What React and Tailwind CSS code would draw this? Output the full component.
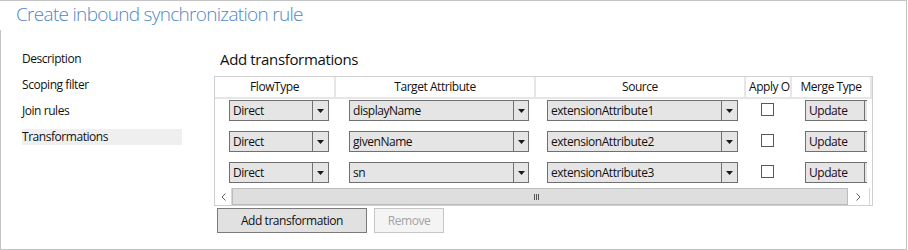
import React from "react";

const FONT = { fontFamily: '"Open Sans", "Noto Sans", sans-serif' };

function Arrow() {
  return (
    <svg width="7" height="4" viewBox="0 0 7 4">
      <path d="M0 0H7L3.5 4Z" fill="#1a1a1a" />
    </svg>
  );
}

function Combo({ w, aw, text }) {
  return (
    <div
      className="flex h-[21px] border border-[#707070] bg-[#e5e5e5] shrink-0"
      style={{ width: w }}
    >
      <div className="flex-1 pl-[3px] text-[12px] leading-[19px] text-[#111] whitespace-nowrap overflow-hidden">
        {text}
      </div>
      <div
        className="flex items-center justify-center border-l border-[#707070] h-full"
        style={{ width: aw }}
      >
        <Arrow />
      </div>
    </div>
  );
}

function Row({ a, b, c }) {
  return (
    <div className="flex h-[31px] pt-[1px]">
      <div className="w-[121px] pl-[14px]">
        <Combo w={100} aw={16} text={a} />
      </div>
      <div className="w-[200px] pl-[13px]">
        <Combo w={180} aw={15} text={b} />
      </div>
      <div className="w-[210px] pl-[11px]">
        <Combo w={191} aw={16} text={c} />
      </div>
      <div className="w-[46px] pl-[15px] pt-[3px]">
        <div className="w-[13px] h-[13px] border border-[#5a5a5a] bg-white" />
      </div>
      <div className="w-[80px] pl-[13px]">
        <div className="w-[62px] overflow-hidden">
          <div className="flex h-[21px] w-[80px] border border-[#707070] bg-[#e5e5e5]">
            <div className="w-[58px] pl-[3px] text-[12px] leading-[19px] text-[#200a20]">Update</div>
            <div className="border-l border-[#707070] flex-1" />
          </div>
        </div>
      </div>
    </div>
  );
}

function HeaderCell({ w, children, left }) {
  return (
    <div
      className={
        "h-full border-r-2 border-[#e6e6e6] text-[12px] leading-[20px] text-[#111] whitespace-nowrap overflow-hidden " +
        (left ? "pl-[3px]" : "text-center")
      }
      style={{ width: w }}
    >
      {children}
    </div>
  );
}

export default function App() {
  return (
    <div className="w-[908px] h-[250px] bg-white tracking-[-0.45px]" style={FONT}>
      <div className="w-[907px] h-[250px] border-t border-r border-b border-[#c4c4c4] flex flex-col">
        <div className="h-[29px] pl-[16px] text-[19px] font-light leading-[26px] tracking-[-0.7px] text-[#4d87c7] whitespace-nowrap">
          Create inbound synchronization rule
        </div>
        <div className="flex-1 border-l border-[#c4c4c4] flex">
          <div className="w-[213px] pt-[21px] pl-[21px] flex flex-col gap-[10px]">
            {["Description", "Scoping filter", "Join rules", "Transformations"].map((t, i) => (
              <div
                key={t}
                className={
                  "w-[160px] h-[16px] text-[12px] leading-[16px] text-[#111] " +
                  (i === 3 ? "bg-[#efefef]" : "")
                }
              >
                {t}
              </div>
            ))}
          </div>
          <div className="flex flex-col pt-[18px]">
            <div className="h-[22px] pl-[6px] text-[15px] leading-[22px] tracking-[-0.35px] text-[#111]">
              Add transformations
            </div>
            <div className="mt-[6px] w-[659px] h-[130px] border border-[#cfcfcf] flex flex-col">
              <div className="flex h-[22px] border-b-2 border-[#e6e6e6]">
                <HeaderCell w={121}>FlowType</HeaderCell>
                <HeaderCell w={200}>Target Attribute</HeaderCell>
                <HeaderCell w={210}>Source</HeaderCell>
                <HeaderCell w={46} left>Apply Once</HeaderCell>
                <HeaderCell w={80}>Merge Type</HeaderCell>
              </div>
              <div className="h-[89px] overflow-hidden">
                <Row a="Direct" b="displayName" c="extensionAttribute1" />
                <Row a="Direct" b="givenName" c="extensionAttribute2" />
                <Row a="Direct" b="sn" c="extensionAttribute3" />
              </div>
              <div className="flex h-[17px] w-[657px]">
                <div className="w-[17px] h-full flex items-center justify-center bg-white border-r border-[#d8d8d8]">
                  <svg width="5" height="8" viewBox="0 0 5 8">
                    <path d="M4.5 0.5L1 4L4.5 7.5" stroke="#606060" strokeWidth="1" fill="none" />
                  </svg>
                </div>
                <div className="w-[616px] h-full bg-[#dedede] border border-[#bcbcbc] flex items-center justify-center">
                  <div className="flex gap-[1px] ml-[-8px]">
                    <div className="w-[1px] h-[6px] bg-[#555]" />
                    <div className="w-[1px] h-[6px] bg-[#555]" />
                    <div className="w-[1px] h-[6px] bg-[#555]" />
                  </div>
                </div>
                <div className="w-[22px] h-full flex items-center justify-center bg-white border-r border-[#d8d8d8]">
                  <svg width="5" height="8" viewBox="0 0 5 8">
                    <path d="M0.5 0.5L4 4L0.5 7.5" stroke="#606060" strokeWidth="1" fill="none" />
                  </svg>
                </div>
              </div>
            </div>
            <div className="flex mt-[2px] pl-[3px] gap-[7px]">
              <div className="w-[150px] h-[25px] bg-[#e1e1e1] border border-[#7a7a7a] text-[12px] leading-[23px] text-center text-[#111]">
                Add transformation
              </div>
              <div className="w-[70px] h-[25px] bg-[#f4f4f4] border border-[#c6c6c6] text-[12px] leading-[23px] text-center text-[#a3a3a3]">
                Remove
              </div>
            </div>
          </div>
        </div>
      </div>
    </div>
  );
}
